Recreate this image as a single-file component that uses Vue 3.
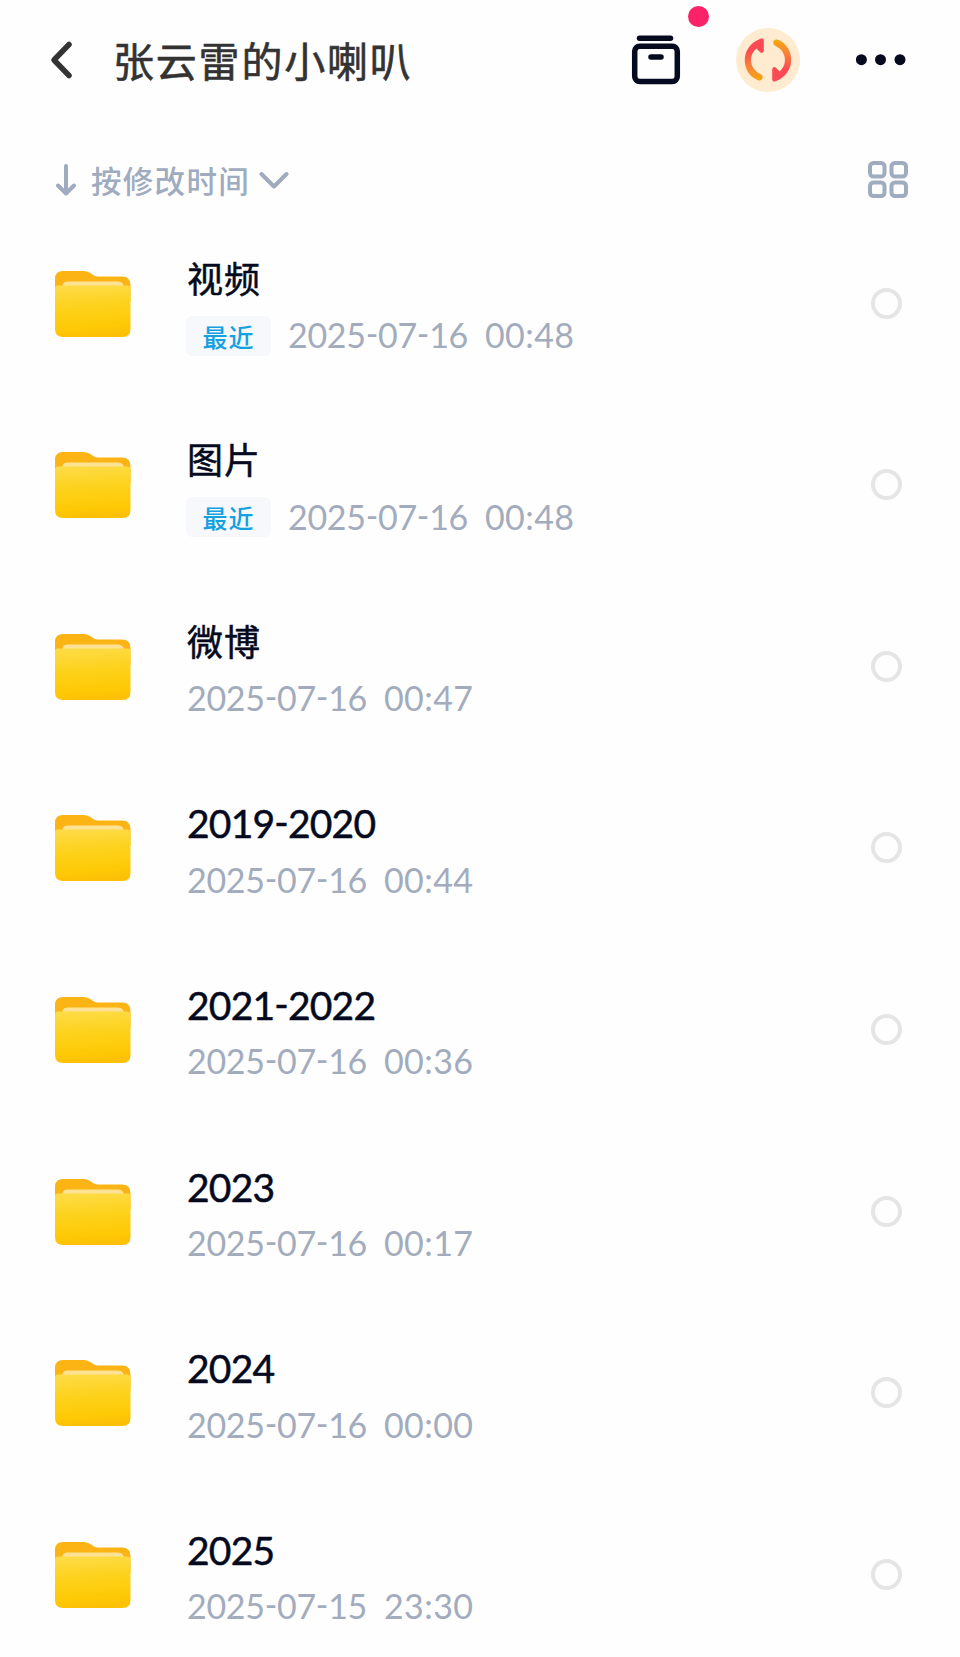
<script setup>
import { ref } from 'vue'

const title = ref('张云雷的小喇叭')
const folders = ref([
  { id: 1, name: '视频', date: '2025-07-16', time: '00:48', recent: true, checked: false },
  { id: 2, name: '图片', date: '2025-07-16', time: '00:48', recent: true, checked: false },
  { id: 3, name: '微博', date: '2025-07-16', time: '00:47', recent: false, checked: false },
  { id: 4, name: '2019-2020', date: '2025-07-16', time: '00:44', recent: false, checked: false },
  { id: 5, name: '2021-2022', date: '2025-07-16', time: '00:36', recent: false, checked: false },
  { id: 6, name: '2023', date: '2025-07-16', time: '00:17', recent: false, checked: false },
  { id: 7, name: '2024', date: '2025-07-16', time: '00:00', recent: false, checked: false },
  { id: 8, name: '2025', date: '2025-07-15', time: '23:30', recent: false, checked: false }
])
const isNumeric = (name) => /^[\d-]+$/.test(name)
</script>

<template>
  <div class="page">
    <header class="header">
      <svg class="back" width="24" height="40" viewBox="0 0 24 40">
        <path d="M20 4.5 L5 20 L20 35.5" />
      </svg>
      <h1 class="header-title">{{ title }}</h1>
      <div class="actions">
        <div class="archive">
          <svg width="50" height="50" viewBox="0 0 50 50">
            <path class="line" d="M8.5 3.3 H39.5" />
            <rect class="line" x="3.7" y="11.2" width="42.6" height="35.2" rx="5" />
            <path class="line" d="M20 22 H30" />
          </svg>
          <span class="dot"></span>
        </div>
        <svg class="sync" width="64" height="64" viewBox="0 0 64 64">
          <defs>
            <linearGradient id="syncLeft" x1="0" y1="0" x2="0" y2="1">
              <stop offset="0.3" stop-color="#f94a55" />
              <stop offset="0.65" stop-color="#f9803b" />
              <stop offset="1" stop-color="#f6a80c" />
            </linearGradient>
            <linearGradient id="syncRight" x1="0" y1="0" x2="0" y2="1">
              <stop offset="0" stop-color="#f6a80c" />
              <stop offset="0.35" stop-color="#f9803b" />
              <stop offset="0.7" stop-color="#f94a55" />
            </linearGradient>
          </defs>
          <circle cx="32" cy="32" r="32" fill="#feebd0" />
          <path
            fill="url(#syncLeft)"
            d="M24.5 10.7 Q27.6 9.5 27.8 12.5 L27.8 22.5 Q27.3 26 24.4 24.5 L20.4 20.6 C12 27.5 13.5 41 24.5 46 C29 48.5 26 54.2 21.5 52 C4.5 44.5 3.5 18.5 24.5 10.7 Z"
          />
          <path
            fill="url(#syncRight)"
            d="M39.5 53.3 Q36.4 54.5 36.2 51.5 L36.2 41.5 Q36.7 38 39.6 39.5 L43.6 43.4 C52 36.5 50.5 23 39.5 18 C35 15.5 38 9.8 42.5 12 C59.5 19.5 60.5 45.5 39.5 53.3 Z"
          />
        </svg>
        <svg class="more" width="50" height="12" viewBox="0 0 50 12">
          <circle cx="5.4" cy="5.7" r="5.5" />
          <circle cx="24.5" cy="5.7" r="5.5" />
          <circle cx="44" cy="5.7" r="5.5" />
        </svg>
      </div>
    </header>

    <div class="toolbar">
      <svg width="22" height="34" viewBox="0 0 22 34">
        <path d="M11 3 V30 M3 22.5 L11 30.5 L19 22.5" />
      </svg>
      <span class="sort-label">按修改时间</span>
      <svg class="chevron" width="30" height="20" viewBox="0 0 30 20">
        <path d="M2.5 4 L15 16.5 L27.5 4" />
      </svg>
      <svg class="grid" width="40" height="38" viewBox="0 0 40 38">
        <rect x="2" y="2" width="14.5" height="13.5" rx="3.5" />
        <rect x="23.5" y="2" width="14.5" height="13.5" rx="3.5" />
        <rect x="2" y="21.5" width="14.5" height="13.5" rx="3.5" />
        <rect x="23.5" y="21.5" width="14.5" height="13.5" rx="3.5" />
      </svg>
    </div>

    <svg class="defs" width="0" height="0">
      <defs>
        <linearGradient id="folderFront" x1="0" y1="0" x2="0.1" y2="1">
          <stop offset="0" stop-color="#fddc49" />
          <stop offset="0.45" stop-color="#fdd21c" />
          <stop offset="0.85" stop-color="#fec905" />
          <stop offset="1" stop-color="#fcc107" />
        </linearGradient>
      </defs>
    </svg>

    <ul class="list">
      <li v-for="item of folders" :key="item.id" class="row">
        <svg class="folder" width="76" height="68" viewBox="0 0 76 68">
          <path
            fill="#fbb414"
            d="M0 9 Q0 1 8 1 H29 Q33 1 36 3.5 L39 5.5 Q40.5 6.5 43 6.5 H67 Q75.5 6.5 75.5 15 V32 H0 Z"
          />
          <path fill="#fde293" d="M7 18 Q7 11.5 12 11.5 H63 Q69 11.5 69 18 Z" />
          <path
            fill="url(#folderFront)"
            d="M0 18 Q0 15.5 3 15.5 H72.5 Q75.5 15.5 75.5 18 V59 Q75.5 67 67.5 67 H8 Q0 67 0 59 Z"
          />
        </svg>
        <div class="info">
          <div class="name" :class="isNumeric(item.name) ? 'name-numeric' : ''">{{ item.name }}</div>
          <div class="meta">
            <span v-if="item.recent" class="tag">最近</span>
            <span class="date">{{ item.date }}</span>
            <span class="time">{{ item.time }}</span>
          </div>
        </div>
        <button
          class="check"
          :class="item.checked ? 'checked' : ''"
          @click="item.checked = !item.checked"
        ></button>
      </li>
    </ul>
  </div>
</template>

<style>
body {
  background: #fefefe;
}
</style>

<style scoped>
.page {
  width: 960px;
  height: 1657px;
  overflow: hidden;
  font-family: Lato, 'Noto Sans CJK SC', sans-serif;
  background: #fefefe;
}
.header {
  display: flex;
  align-items: center;
  height: 120px;
  padding: 0 54px 0 49px;
}
.back {
  fill: none;
  stroke: #333;
  stroke-width: 5.5;
  stroke-linecap: round;
  stroke-linejoin: round;
}
.header-title {
  margin: 0 0 2px 40px;
  font: 400 41px/60px 'Noto Sans CJK SC', sans-serif;
  letter-spacing: 1.8px;
  color: #333;
  -webkit-text-stroke: 0.6px #333;
}
.actions {
  display: flex;
  align-items: center;
  margin-left: auto;
}
.archive {
  position: relative;
  height: 50px;
}
.line {
  fill: none;
  stroke: #050a1e;
  stroke-width: 5.5;
  stroke-linecap: round;
}
.dot {
  position: absolute;
  top: -29px;
  right: -28px;
  width: 21px;
  height: 21px;
  border-radius: 50%;
  background: #fb2268;
}
.sync {
  margin-left: 55px;
}
.more {
  margin-left: 56px;
  fill: #050a1e;
}
.toolbar {
  display: flex;
  align-items: center;
  height: 60px;
  margin-top: 30px;
  padding: 0 52px 0 55px;
  color: #9fabbf;
}
.toolbar svg {
  fill: none;
  stroke: #9fabbf;
  stroke-width: 4;
  stroke-linecap: round;
  stroke-linejoin: round;
}
.sort-label {
  margin: 0 0 0 14px;
  font: 500 30.5px/58px 'Noto Sans CJK SC', sans-serif;
  letter-spacing: 1.3px;
}
.chevron {
  margin-left: 9px;
}
.toolbar .grid {
  margin-left: auto;
}
.defs {
  display: block;
}
.list {
  margin: 2.5px 0 0;
  padding: 0;
  list-style: none;
}
.row {
  display: flex;
  align-items: center;
  height: 181.55px;
  padding: 0 58px 0 55px;
}
.folder {
  margin-top: 1px;
}
.info {
  margin-left: 56px;
  padding-top: 9px;
}
.name {
  height: 54px;
  font: 400 36px/53px 'Noto Sans CJK SC', sans-serif;
  letter-spacing: 1.1px;
  color: #050a1e;
  -webkit-text-stroke: 0.5px #050a1e;
}
.name-numeric {
  font: 400 39px/56px Lato, sans-serif;
  font-feature-settings: 'tnum', 'case';
  letter-spacing: -0.8px;
  -webkit-text-stroke: 0.5px #050a1e;
}
.meta {
  display: flex;
  align-items: center;
  height: 60px;
  font-size: 34px;
  font-feature-settings: 'tnum', 'case';
  letter-spacing: -0.3px;
  color: #a3acbd;
}
.tag {
  width: 85px;
  height: 40px;
  margin: 2px 17px 0 -1px;
  border-radius: 6px;
  background: #f6f8fc;
  color: #15a0e0;
  font: 500 25px/41px 'Noto Sans CJK SC', sans-serif;
  letter-spacing: 1px;
  text-align: center;
}
.date {
  width: 197px;
}
.time {
  letter-spacing: 0.4px;
}
.check {
  width: 31px;
  height: 31px;
  margin-left: auto;
  padding: 0;
  border: 4px solid #e5e5e6;
  border-radius: 50%;
  background: transparent;
  cursor: pointer;
}
.checked {
  background: #15a0e0;
}
</style>
